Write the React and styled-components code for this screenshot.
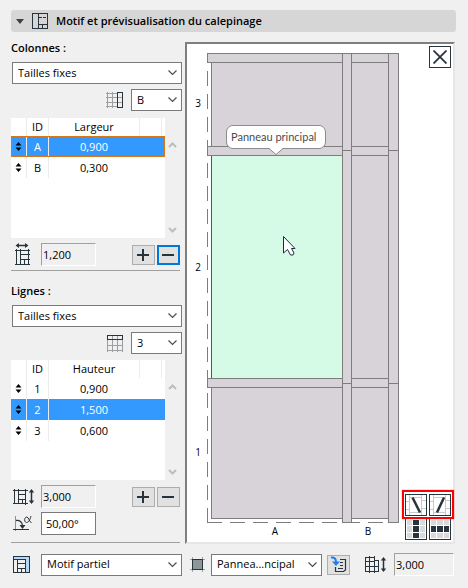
import React, { useState } from 'react'
import styled, { createGlobalStyle, css } from 'styled-components'

const ink = '#27343c'
const faint = '#9a9fa3'
const border = '#7a7a7a'
const panelFill = '#d8d3d9'
const panelLine = '#7d7d7d'
const selected = '#3399ff'

const GlobalStyle = createGlobalStyle`
     * {
          box-sizing: border-box;
     }

     body {
          margin: 0;
          background-color: #f0f0f0;
          color: #000;
          font-family: "Open Sans", "Noto Sans", sans-serif;
          font-size: 11px;
          line-height: 16px;
     }

     input, select, button {
          font: inherit;
          color: inherit;
          margin: 0;
          border-radius: 0;
     }

     svg {
          display: block;
          flex: none;
     }
`

const Page = styled.main`
     padding: 10px 12px 12px 11px;
`

const Header = styled.button`
     display: flex;
     align-items: center;
     width: 100%;
     height: 22px;
     padding: 0 5px;
     border: none;
     border-radius: 3px;
     background-color: #d6d6d6;
     font-weight: 600;
     text-align: left;

     svg + svg {
          margin: 0 8px;
     }
`

const Body = styled.div`
     display: flex;
     align-items: stretch;
     gap: 3px;
     margin: 10px 1px 0 0;
`

const Side = styled.div`
     display: flex;
     flex-direction: column;
     width: 171px;
     flex: none;
`

const Group = styled.section`
     display: flex;
     flex-direction: column;
     padding-bottom: 4px;
     margin: 0 2px 10px 0;
     border-bottom: 1px solid #a0a0a0;

     &:last-child {
          padding-bottom: 7px;
          margin-bottom: 0;
     }
`

const Title = styled.label`
     margin-bottom: 8px;
     padding-top: ${ props => props.$first ? '0' : '4px' };
     line-height: 12px;
     font-weight: 600;
`

const SelectBox = styled.span`
     position: relative;
     display: flex;
     align-items: center;
     width: ${ props => props.$width || 'auto' };
     height: 22px;
     border: 1px solid ${ border };
     background-color: #fff;

     select {
          width: 100%;
          height: 20px;
          padding: 0 20px 1px 5px;
          border: none;
          background: transparent;
          appearance: none;
     }

     svg {
          position: absolute;
          right: 4px;
          pointer-events: none;
     }
`

const WideSelect = styled.div`
     margin: 0 -2px 5px 1px;
`

const PickRow = styled.div`
     display: flex;
     justify-content: flex-end;
     align-items: center;
     gap: 8px;
     margin: 0 -2px ${ props => props.$gap } 0;
`

const List = styled.div`
     display: flex;
     height: 120px;
     margin-bottom: 5px;
`

const ListBody = styled.div`
     flex: 1;
     background-color: #fff;
`

const Scroll = styled.div`
     display: flex;
     flex-direction: column;
     justify-content: space-between;
     align-items: flex-end;
     width: 15px;
     padding: 24px 3px 5px 0;
`

const Table = styled.table`
     width: 100%;
     border-collapse: separate;
     border-spacing: 0;
     table-layout: fixed;
     text-align: center;

     th, td {
          padding: 0;
          border-right: 1px solid #ececec;
          font-weight: normal;
     }

     th {
          height: 18px;
     }

     td {
          height: 21px;
     }

     th:last-child,
     td:nth-child(n + 3) {
          border-right-color: transparent;
     }

     td svg {
          margin: 0 auto;
     }
`

const Row = styled.tr`
     ${ props => props.$selected && css`
          color: #fff;

          td {
               background-color: ${ selected };
          }
     ` }

     ${ props => props.$focused && css`
          outline: 1px dotted #d9791a;
          outline-offset: -1px;
     ` }
`

const FieldRow = styled.div`
     display: flex;
     align-items: center;
     gap: 2px;

     & + & {
          margin-top: 4px;
     }
`

const IconCell = styled.label`
     display: flex;
     width: 28px;
     padding-left: 2px;
`

const Field = styled.input`
     flex: none;
     width: ${ props => props.$width || '55px' };
     height: 23px;
     padding: 0 4px;
     outline: none;
     border: 1px solid ${ border };
     background-color: #fff;

     &:read-only {
          padding: 0 1px;
          border-color: #a0a0a0 #fff #fff #a0a0a0;
          background-color: #f0f0f0;
     }
`

const Tool = styled.button`
     display: flex;
     align-items: center;
     justify-content: center;
     flex: none;
     width: 23px;
     height: 20px;
     padding: 0;
     border: ${ props => props.$active ? '2px solid #0078d7' : '1px solid #adadad' };
     background-color: #e1e1e1;
     margin-left: ${ props => props.$push ? 'auto' : '0' };
`

const Preview = styled.div`
     position: relative;
     flex: 1;
     border: 2px solid;
     border-color: #7f7f7f #e6e6e6 #e6e6e6 #7f7f7f;
     background-color: #fff;
`

const Balloon = styled.div`
     position: absolute;
     left: 39px;
     top: 81px;
     height: 24px;
     padding: 3px 9px 3px 4px;
     border: 1px solid #8c8c8c;
     border-radius: 7px;
     background-color: #fff;
     color: #4b4b4b;
     font-family: Lato, "Open Sans", sans-serif;
     white-space: nowrap;

     svg {
          position: absolute;
          left: 42px;
          top: 22px;
     }
`

const Square = styled.button`
     display: flex;
     align-items: center;
     justify-content: center;
     width: 22px;
     height: 22px;
     padding: 0;
     border: 1px solid ${ ink };
     background-color: #fff;
`

const Close = styled(Square)`
     position: absolute;
     right: 2px;
     top: 2px;
`

const Palette = styled.div`
     position: absolute;
     right: -1px;
     bottom: 2px;
`

const PaletteRow = styled.div`
     display: flex;
     gap: 2px;
     padding: 0 3px;
`

const Highlight = styled(PaletteRow)`
     padding: 2px 1px 1px;
     border: 2px solid #f00;
     box-shadow: 0 0 1px #ff4040;
     margin-bottom: -1px;
     position: relative;
`

const Footer = styled.footer`
     display: flex;
     align-items: center;
     margin-top: 9px;
     padding-right: 2px;
`

const FooterIcon = styled.label`
     display: flex;
     justify-content: center;
     width: ${ props => props.$width };
     margin-right: ${ props => props.$gap };
     margin-left: 7px;

     &:first-child {
          margin-left: 2px;
     }
`

const FooterTool = styled(Tool)`
     margin-left: 5px;
     margin-right: 8px;
`

const FooterSelect = styled.div`
     flex: ${ props => props.$grow } 1 0;
     min-width: 0;
`

const Chevron = ({ color = '#4d4d4d' }) => (
     <svg width="9" height="6" viewBox="0 0 9 6" fill="none" stroke={ color } strokeWidth="1.2">
          <path d="M.5 .5L4.500 4.500L8.500 .5"/>
     </svg>
)

const ScrollArrow = ({ down }) => (
     <svg width="9" height="6" viewBox="0 0 9 6" fill="none" stroke="#bdbdbd" strokeWidth="2">
          <path d={ down ? 'M1 1L4.500 4.500L8 1' : 'M1 5L4.500 1.500L8 5' }/>
     </svg>
)

const Handle = () => (
     <svg width="7" height="9" viewBox="0 0 7 9" fill="#000">
          <path d="M3.500 0L6.500 3.500H.5ZM3.500 9L6.500 5.500H.5Z"/>
     </svg>
)

const HeaderIcon = () => (
     <svg width="16" height="16" viewBox="0 0 16 16" fill="none" stroke={ ink } shapeRendering="crispEdges">
          <path d="M.5 .5H15.500V15.500H.5ZM6.500 0V16M6.500 11.500H15M10.500 11.500V15"/>
          <path d="M7 4.500H15" strokeDasharray="3 1"/>
     </svg>
)

const ColumnIcon = () => (
     <svg width="17" height="17" viewBox="0 0 17 17" fill="none" shapeRendering="crispEdges">
          <path d="M1.500 0V16M6.500 0V16M0 1.500H11M0 5.500H17M0 10.500H17M0 14.500H11" stroke={ faint }/>
          <path d="M11.500 .5H16.500V15.500H11.500Z" stroke={ ink }/>
     </svg>
)

const LineIcon = () => (
     <svg width="16" height="17" viewBox="0 0 16 17" fill="none" shapeRendering="crispEdges">
          <path d="M.5 5V17M5.500 1V17M10.500 1V17M15.500 5V17M0 10.500H16M0 15.500H16" stroke={ faint }/>
          <path d="M.5 .5H15.500V4.500H.5Z" stroke={ ink }/>
     </svg>
)

const WidthIcon = () => (
     <svg width="19" height="23" viewBox="-2 0 19 23" fill="none" stroke={ ink }>
          <path d="M2 2.500H12" strokeWidth="1.500"/>
          <path d="M4 0L.5 2.500L4 5ZM10 0L13.500 2.500L10 5Z" fill={ ink } stroke="none"/>
          <path d="M1.500 6V22M5.500 6V22M13.500 6V22M0 7.500H15M6 11.500H15M6 16.500H15M0 21.500H15M9.500 17V21" shapeRendering="crispEdges"/>
     </svg>
)

const HeightIcon = () => (
     <svg width="22" height="17" viewBox="0 0 22 17" fill="none" stroke={ ink }>
          <path d="M1.500 1V16M5.500 1V16M12.500 1V17M0 2.500H15M6 6.500H13M6 11.500H13M0 15.500H15M9.500 12V15" shapeRendering="crispEdges"/>
          <path d="M18.500 3V14" strokeWidth="1.500"/>
          <path d="M15.800 4.500L18.500 1L21.200 4.500ZM15.800 12.500L18.500 16L21.200 12.500Z" fill={ ink } stroke="none"/>
     </svg>
)

const AngleIcon = () => (
     <svg width="20" height="17" viewBox="0 0 20 17" fill="none" stroke={ ink }>
          <path d="M2.500 1V16" stroke="#8a8f92" shapeRendering="crispEdges"/>
          <path d="M0 14.500H16" shapeRendering="crispEdges"/>
          <path d="M3 5.500C7 5 9.500 7.500 9.500 11" strokeWidth="1.300"/>
          <path d="M6.500 10L9.500 14L12.500 10Z" fill={ ink } stroke="none"/>
          <path d="M18 1C17 5 15.500 7.500 13.500 7.500C11 7.500 11 2 13.800 2C16 2 16 7.500 18.500 7.500"/>
     </svg>
)

const PartialIcon = () => (
     <svg width="17" height="17" viewBox="0 0 17 17" fill="none" stroke={ ink } shapeRendering="crispEdges">
          <rect x=".5" y=".5" width="16" height="16" fill="#b5d9fa"/>
          <rect x=".5" y="3.500" width="12" height="13" fill="#f0f0f0"/>
          <path d="M4.500 3V17M5 7.500H12M5 12.500H12M8.500 13V16"/>
     </svg>
)

const PanelIcon = () => (
     <svg width="15" height="15" viewBox="0 0 15 15" shapeRendering="crispEdges">
          <path d="M2.500 0V15M12.500 0V15M0 2.500H15M0 12.500H15" stroke="#9ba4a8"/>
          <rect x="2.500" y="2.500" width="10" height="10" fill="#8f9699" stroke={ ink }/>
     </svg>
)

const ApplyIcon = () => (
     <svg width="17" height="17" viewBox="0 0 17 17" fill="none" stroke={ ink }>
          <path d="M10 3.500H15.500V14L13.500 15.500H5.500V11" strokeWidth="1.200"/>
          <path d="M10 6.500H13M10 9.500H13M8 12.500H13"/>
          <path d="M1 1.500C4 1 6 2.500 6 6" stroke="#1c7df0" strokeWidth="2"/>
          <path d="M2 5.500H10L6 10Z" fill="#1c7df0" stroke="none"/>
     </svg>
)

const TotalIcon = () => (
     <svg width="22" height="17" viewBox="0 0 22 17" fill="none" stroke={ ink }>
          <path d="M.5 1.500H9.500V4.500H13.500V15.500H.5ZM4.500 0V17M9.500 0V17M0 5.500H10M0 10.500H14" shapeRendering="crispEdges"/>
          <path d="M18.500 3V14" strokeWidth="1.500"/>
          <path d="M15.800 4.500L18.500 1L21.200 4.500ZM15.800 12.500L18.500 16L21.200 12.500Z" fill={ ink } stroke="none"/>
     </svg>
)

const Sign = ({ plus }) => (
     <svg width="13" height="12" viewBox="0 0 13 12" stroke={ ink } strokeWidth="2" shapeRendering="crispEdges">
          <path d={ plus ? 'M0 6H12M6 0V12' : 'M0 6H12' }/>
     </svg>
)

const DiagonalIcon = ({ up }) => (
     <svg width="20" height="20" viewBox="0 0 20 20" fill="none">
          <path d="M3.500 0V20M15.500 0V20M0 6.500H4M0 14.500H4M16 5.500H20M16 13.500H20M4 2.500H16M4 17.500H16" stroke="#c9c9c9"/>
          <path d={ up ? 'M14 2.500L7 17.500' : 'M6.500 2.500L14 17.500' } stroke={ ink } strokeWidth="2.500"/>
     </svg>
)

// start and size of the three cells along one side
const cells = [[1, 5], [7, 6], [14, 5]]

const CellsIcon = ({ vertical }) => (
     <svg width="20" height="20" viewBox="0 0 20 20" shapeRendering="crispEdges">
          { cells.map(([y, height], row) => cells.map(([x, width], col) => (
               <rect key={ `${ x }-${ y }` } x={ x } y={ y } width={ width } height={ height }
                    fill={ (vertical ? col : row) === 1 ? ink : '#d9d9d9' }/>
          ))) }
     </svg>
)

const Drawing = () => (
     <svg width="266" height="498" viewBox="0 0 266 498">
          <g fill={ panelFill } stroke={ panelLine } shapeRendering="crispEdges">
               <path d="M20.500 27V478" strokeDasharray="15 8" fill="none"/>
               <path d="M20 478.500H201" strokeDasharray="15 8" fill="none"/>
               <rect x="24.500" y="18.500" width="131" height="84"/>
               <rect x="164.500" y="18.500" width="37" height="84"/>
               <rect x="24.500" y="343.500" width="131" height="131"/>
               <rect x="164.500" y="343.500" width="37" height="131"/>
               <rect x="164.500" y="111.500" width="37" height="223"/>
               <rect x="24.500" y="111.500" width="131" height="223" fill="#d5fbe6" stroke="#1c7a35"/>
               <rect x="20.500" y="9.500" width="181" height="9"/>
               <rect x="20.500" y="102.500" width="181" height="9"/>
               <rect x="20.500" y="334.500" width="181" height="9"/>
               <rect x="155.500" y="9.500" width="9" height="469"/>
               <rect x="201.500" y="9.500" width="10" height="469"/>
               <path d="M155 106.500H165M201 106.500H212M155 339.500H165M201 339.500H212"/>
          </g>
          <g fontSize="10" textAnchor="middle" fill="#000">
               <text x="11" y="63">3</text>
               <text x="11" y="227">2</text>
               <text x="11" y="412">1</text>
               <text x="88" y="491">A</text>
               <text x="181" y="491">B</text>
          </g>
          <path d="M96.500 192.500V209L100.500 205.500L103.500 211H106L107 209L104.500 204.500H108Z" fill="#fff" stroke="#222b3a"/>
     </svg>
)

const Select = ({ id, options, width, label }) => (
     <SelectBox $width={ width }>
          <select id={ id } aria-label={ label }>
               { options.map(option => <option key={ option }>{ option }</option>) }
          </select>
          <Chevron/>
     </SelectBox>
)

const SizeList = ({ heading, rows, initial, focused }) => {
     const [current, setCurrent] = useState(initial)

     return (
          <List>
               <ListBody>
                    <Table>
                         <colgroup>
                              <col style={{ width: 16 }}/>
                              <col style={{ width: 22 }}/>
                              <col/>
                              <col style={{ width: 22 }}/>
                              <col style={{ width: 3 }}/>
                         </colgroup>
                         <thead>
                              <tr><th/><th>ID</th><th>{ heading }</th><th/><th/></tr>
                         </thead>
                         <tbody>
                              { rows.map(([id, size]) => (
                                   <Row key={ id } $selected={ id === current } $focused={ focused && id === current } onClick={ () => setCurrent(id) }>
                                        <td><Handle/></td>
                                        <td>{ id }</td>
                                        <td>{ size }</td>
                                        <td/>
                                        <td/>
                                   </Row>
                              )) }
                         </tbody>
                    </Table>
               </ListBody>
               <Scroll>
                    <ScrollArrow/>
                    <ScrollArrow down/>
               </Scroll>
          </List>
     )
}

const App = () => (
     <>
          <GlobalStyle/>
          <Page>
               <Header type="button">
                    <svg width="8" height="5" viewBox="0 0 8 5" fill="#404040"><path d="M0 0H8L4 5Z"/></svg>
                    <HeaderIcon/>
                    Motif et prévisualisation du calepinage
               </Header>
               <Body>
                    <Side>
                         <Group>
                              <Title htmlFor="columns" $first>Colonnes :</Title>
                              <WideSelect><Select id="columns" options={ ['Tailles fixes'] }/></WideSelect>
                              <PickRow $gap="7px">
                                   <ColumnIcon/>
                                   <Select label="Colonne" width="51px" options={ ['B', 'A'] }/>
                              </PickRow>
                              <SizeList heading="Largeur" rows={ [['A', '0,900'], ['B', '0,300']] } initial="A" focused/>
                              <FieldRow>
                                   <IconCell htmlFor="width"><WidthIcon/></IconCell>
                                   <Field id="width" defaultValue="1,200" readOnly/>
                                   <Tool type="button" aria-label="Ajouter" $push><Sign plus/></Tool>
                                   <Tool type="button" aria-label="Supprimer" $active><Sign/></Tool>
                              </FieldRow>
                         </Group>
                         <Group>
                              <Title htmlFor="lines">Lignes :</Title>
                              <WideSelect><Select id="lines" options={ ['Tailles fixes'] }/></WideSelect>
                              <PickRow $gap="6px">
                                   <LineIcon/>
                                   <Select label="Ligne" width="51px" options={ ['3', '2', '1'] }/>
                              </PickRow>
                              <SizeList heading="Hauteur" rows={ [['1', '0,900'], ['2', '1,500'], ['3', '0,600']] } initial="2"/>
                              <FieldRow>
                                   <IconCell htmlFor="height"><HeightIcon/></IconCell>
                                   <Field id="height" defaultValue="3,000" readOnly/>
                                   <Tool type="button" aria-label="Ajouter" $push><Sign plus/></Tool>
                                   <Tool type="button" aria-label="Supprimer"><Sign/></Tool>
                              </FieldRow>
                              <FieldRow>
                                   <IconCell htmlFor="angle"><AngleIcon/></IconCell>
                                   <Field id="angle" defaultValue="50,00°"/>
                              </FieldRow>
                         </Group>
                    </Side>
                    <Preview>
                         <Drawing/>
                         <Balloon>
                              Panneau principal
                              <svg width="14" height="8" viewBox="0 0 14 8"><path d="M0 0H14L7 6.500Z" fill="#fff"/><path d="M0 .5L7 6.500L14 .5" fill="none" stroke="#8c8c8c"/></svg>
                         </Balloon>
                         <Close type="button" aria-label="Fermer">
                              <svg width="14" height="14" viewBox="0 0 14 14" stroke={ ink } strokeWidth="1.800"><path d="M.5 .5L13.500 13.500M13.500 .5L.5 13.500"/></svg>
                         </Close>
                         <Palette>
                              <Highlight>
                                   <Square type="button" aria-label="Diagonale descendante"><DiagonalIcon/></Square>
                                   <Square type="button" aria-label="Diagonale montante"><DiagonalIcon up/></Square>
                              </Highlight>
                              <PaletteRow>
                                   <Square type="button" aria-label="Colonne"><CellsIcon vertical/></Square>
                                   <Square type="button" aria-label="Ligne"><CellsIcon/></Square>
                              </PaletteRow>
                         </Palette>
                    </Preview>
               </Body>
               <Footer>
                    <FooterIcon htmlFor="pattern" $width="17px" $gap="11px"><PartialIcon/></FooterIcon>
                    <FooterSelect $grow={ 141 }><Select id="pattern" options={ ['Motif partiel'] }/></FooterSelect>
                    <FooterIcon htmlFor="panel" $width="17px" $gap="5px"><PanelIcon/></FooterIcon>
                    <FooterSelect $grow={ 111 }><Select id="panel" options={ ['Pannea...ncipal'] }/></FooterSelect>
                    <FooterTool type="button" aria-label="Appliquer"><ApplyIcon/></FooterTool>
                    <FooterIcon htmlFor="total" $width="22px" $gap="7px"><TotalIcon/></FooterIcon>
                    <Field id="total" defaultValue="3,000" readOnly $width="60px"/>
               </Footer>
          </Page>
     </>
)

export default App
